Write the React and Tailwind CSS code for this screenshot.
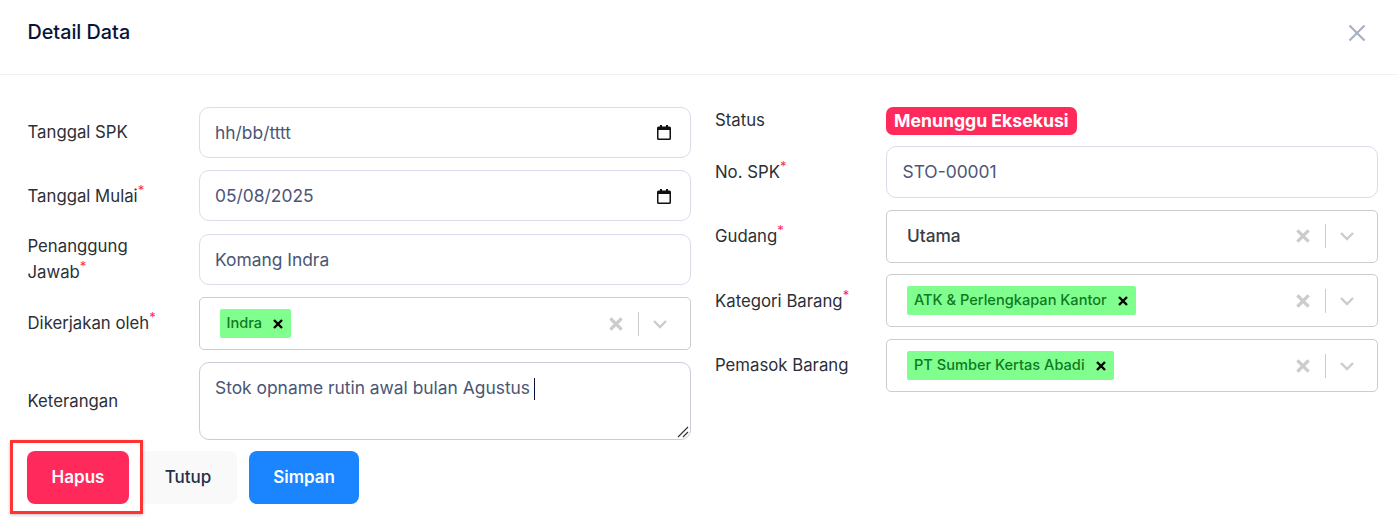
function Req() {
  return <sup className="text-[#ff2a5b] text-[13px] leading-none top-[-7px]">*</sup>;
}

function CalendarIcon() {
  return (
    <svg width="14" height="15" viewBox="0 0 14 15" className="shrink-0">
      <path d="M3 0h2v1.5h4V0h2v1.5h1.5A1.5 1.5 0 0 1 14 3v10.5a1.5 1.5 0 0 1-1.5 1.5h-11A1.5 1.5 0 0 1 0 13.5V3a1.5 1.5 0 0 1 1.5-1.5H3zM1.5 5v8.5h11V5z" fill="#111" />
    </svg>
  );
}

function Label({ children, req }) {
  return (
    <div className="w-[171px] shrink-0 pr-5 -mt-[0.5px] text-[16.75px] leading-[26px] text-[#2b2f38]">
      {children}
      {req && <Req />}
    </div>
  );
}

function TextField({ label, req, value, date }) {
  return (
    <div className="flex items-center">
      <Label req={req}>{label}</Label>
      <div className="flex-1 h-[51.2px] rounded-[10px] border border-[#dcdcec] bg-white pl-[15.5px] pr-[19px] pt-[0.5px] flex items-center justify-between text-[17.4px] text-[#4b5675]">
        <span>{value}</span>
        {date && <CalendarIcon />}
      </div>
    </div>
  );
}

function Cross({ size = 8, color = "#000", width = 2 }) {
  return (
    <svg width={size} height={size} viewBox="0 0 10 10">
      <path d="M1 1l8 8M9 1l-8 8" stroke={color} strokeWidth={width} fill="none" />
    </svg>
  );
}

function Tag({ children }) {
  return (
    <div className="h-[29px] rounded-[2px] bg-[#80ff8f] pl-[7px] pr-[8px] flex items-center gap-[11px] text-[14.6px] font-medium text-[#0f7a1f]">
      <span>{children}</span>
      <Cross size={10} width={2.4} />
    </div>
  );
}

function SelectField({ label, req, children }) {
  return (
    <div className="flex items-center">
      <Label req={req}>{label}</Label>
      <div className="flex-1 h-[53px] rounded-[5px] border border-[#cccccc] bg-white flex items-center pl-5 pr-[20px]">
        <div className="flex-1 flex items-center">{children}</div>
        <Cross size={14} color="#cccccc" width={2.4} />
        <div className="w-px h-6 bg-[#cccccc] ml-[15px] mr-[11px]" />
        <svg width="20" height="20" viewBox="0 0 20 20">
          <path d="M4 7l6 6 6-6" stroke="#cccccc" strokeWidth="2.4" fill="none" />
        </svg>
      </div>
    </div>
  );
}

export default function App() {
  return (
    <div className="relative w-[1398px] h-[518px] bg-white overflow-hidden" style={{ fontFamily: "Inter, sans-serif" }}>
      <div className="h-[75px] border-b border-[#f1f1f4] pl-[27.5px] pr-[31px] pb-[9px] flex items-center justify-between">
        <h2 className="text-[19.75px] font-medium text-[#071437] leading-none">Detail Data</h2>
        <svg width="20" height="20" viewBox="0 0 20 20">
          <path d="M2.5 2.5l15 15M17.5 2.5l-15 15" stroke="#a9b0c4" strokeWidth="2.2" fill="none" />
        </svg>
      </div>

      <div className="pl-[27.5px] pr-5 pt-8 grid grid-cols-[663.5px_663px] gap-x-6">
        <div className="flex flex-col gap-[12.1px]">
          <TextField label="Tanggal SPK" value="hh/bb/tttt" date />
          <TextField label="Tanggal Mulai" req value="05/08/2025" date />
          <TextField label="Penanggung Jawab" req value="Komang Indra" />
          <SelectField label="Dikerjakan oleh" req>
            <Tag>Indra</Tag>
          </SelectField>
          <div className="flex items-center">
            <Label>Keterangan</Label>
            <div className="relative flex-1 h-[78px] rounded-[10px] border border-[#c9cdda] bg-white pl-[15.5px] pt-[13px] text-[17.4px] leading-[24px] text-[#4b5675] flex items-start">
              <span>Stok opname rutin awal bulan Agustus</span>
              <span className="w-px h-[22px] bg-[#071437] ml-[4px] mt-[2px]" />
              <svg width="12" height="12" viewBox="0 0 12 12" className="absolute right-[1px] bottom-[1px]">
                <path d="M11 1L1 11M11 6L6 11" stroke="#333" strokeWidth="1.2" fill="none" />
              </svg>
            </div>
          </div>
        </div>

        <div className="flex flex-col">
          <div className="flex items-center h-[28px] mb-[11.4px]">
            <div className="-mt-[1px]"><Label>Status</Label></div>
            <div className="h-[28px] rounded-[7px] bg-[#ff2a5b] px-2 flex items-center text-[17.65px] font-bold text-white whitespace-nowrap">
              Menunggu Eksekusi
            </div>
          </div>
          <div className="flex flex-col gap-[11.7px]">
            <div className="mb-[0.4px]">
              <TextField label="No. SPK" req value="STO-00001" />
            </div>
            <SelectField label="Gudang" req>
              <span className="text-[17.25px] font-medium text-[#3a3e47]">Utama</span>
            </SelectField>
            <SelectField label="Kategori Barang" req>
              <Tag>ATK &amp; Perlengkapan Kantor</Tag>
            </SelectField>
            <SelectField label="Pemasok Barang">
              <Tag>PT Sumber Kertas Abadi</Tag>
            </SelectField>
          </div>
        </div>
      </div>

      <div className="pl-[27px] mt-[11px] flex gap-3 text-[17px] font-semibold">
        <button className="w-[102px] h-[53px] rounded-[8px] bg-[#ff2a5b] text-white">Hapus</button>
        <button className="w-[98px] h-[53px] rounded-[8px] bg-[#f9f9f9] text-[#252f4a] font-medium -ml-[2px]">Tutup</button>
        <button className="w-[110px] h-[53px] rounded-[8px] bg-[#1b84ff] text-white">Simpan</button>
      </div>

      <div className="absolute left-[10px] top-[440px] w-[133px] h-[74px] border-[3px] border-[#ff3333] shadow-[0_1px_3px_rgba(0,0,0,0.25)]" />
    </div>
  );
}
